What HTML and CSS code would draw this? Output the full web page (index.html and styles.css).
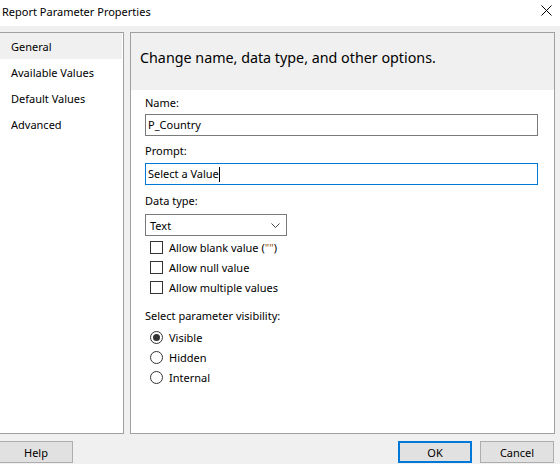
FILE: index.html
```html
<!DOCTYPE html>
<html lang="en">
<head>
  <meta charset="UTF-8" />
  <title>Report Parameter Properties</title>
  <link rel="stylesheet" href="styles.css">
</head>
<body>

<div class="title-bar">
  <span class="title-text">Report Parameter Properties</span>
  <svg class="close-icon" width="11" height="11" viewBox="0 0 11 11">
    <path d="M0.5 0.5 L10.5 10.5 M10.5 0.5 L0.5 10.5" stroke="#000" stroke-width="1" fill="none" />
  </svg>
</div>

<div class="panels">
  <ul class="side-nav">
    <li class="selected">General</li>
    <li>Available Values</li>
    <li>Default Values</li>
    <li>Advanced</li>
  </ul>

  <div class="page">
    <div class="page-header">Change name, data type, and other options.</div>

    <div class="page-form">
      <label class="field-label name-label">Name:</label>
      <div class="text-box">P_Country</div>

      <label class="field-label prompt-label">Prompt:</label>
      <div class="text-box focused">Select a Value<span class="caret"></span></div>

      <label class="field-label type-label">Data type:</label>
      <div class="select-box">
        <span>Text</span>
        <svg width="9" height="5" viewBox="0 0 9 5">
          <path d="M0.5 0.5 L4.5 4.5 L8.5 0.5" stroke="#444" stroke-width="1" fill="none" />
        </svg>
      </div>

      <div class="check-list">
        <div class="check-row"><span class="check-box"></span>Allow blank value (<span class="quotes">""</span>)</div>
        <div class="check-row"><span class="check-box"></span>Allow null value</div>
        <div class="check-row"><span class="check-box"></span>Allow multiple values</div>
      </div>

      <label class="field-label visibility-label">Select parameter visibility:</label>
      <div class="radio-list">
        <div class="radio-row"><span class="radio checked"></span>Visible</div>
        <div class="radio-row"><span class="radio"></span>Hidden</div>
        <div class="radio-row"><span class="radio"></span>Internal</div>
      </div>
    </div>
  </div>
</div>

<div class="button-row">
  <button class="btn">Help</button>
  <div class="btn-group">
    <button class="btn default">OK</button>
    <button class="btn">Cancel</button>
  </div>
</div>

</body>
</html>
```

FILE: styles.css
```css
body {
  font-family: "Noto Sans", Arial, sans-serif;
  font-size: 11px;
  color: #000;
  background-color: #f0f0f0;
  margin: 0;
  padding: 0;
  width: 560px;
  height: 464px;
  overflow: hidden;
}

.title-bar {
  height: 26px;
  background-color: #fff;
  display: flex;
  justify-content: space-between;
  align-items: center;
  padding: 0 8px 0 2px;
  box-sizing: border-box;
}

.title-text {
  margin-top: -3px;
}

.close-icon {
  margin-top: -6px;
}

.panels {
  display: flex;
  gap: 6px;
  margin: 6px 0 0 -1px;
  height: 402px;
}

.side-nav {
  list-style: none;
  margin: 0;
  padding: 0;
  width: 125px;
  background-color: #fff;
  border: 1px solid #a0a0a0;
  box-sizing: border-box;
}

.side-nav li {
  height: 26px;
  line-height: 28px;
  padding-left: 11px;
  margin-right: 1px;
}

.side-nav li.selected {
  background-color: #f0f0f0;
}

.page {
  width: 425px;
  background-color: #fff;
  border: 1px solid #a0a0a0;
  box-sizing: border-box;
}

.page-header {
  height: 57px;
  background-color: #f0f0f0;
  font-size: 14.3px;
  line-height: 20px;
  padding: 15px 0 0 9px;
  box-sizing: border-box;
}

.page-form {
  padding: 0 16px 0 14px;
}

.field-label {
  display: block;
  line-height: 16px;
}

.name-label { margin-top: 5px; }
.prompt-label { margin-top: 7px; }
.type-label { margin-top: 8px; }
.visibility-label { margin-top: 11px; }

.text-box {
  height: 22px;
  line-height: 20px;
  border: 1px solid #7a7a7a;
  padding-left: 2px;
  margin-top: 3px;
  box-sizing: border-box;
  display: flex;
  align-items: center;
}

.text-box.focused {
  border-color: #0078d7;
  margin-top: 4px;
}

.caret {
  display: inline-block;
  width: 1px;
  height: 15px;
  background-color: #000;
}

.select-box {
  width: 142px;
  height: 22px;
  border: 1px solid #7a7a7a;
  margin-top: 5px;
  padding: 0 6px 0 4px;
  box-sizing: border-box;
  display: flex;
  justify-content: space-between;
  align-items: center;
}

.check-list {
  margin-top: 1px;
}

.check-row,
.radio-row {
  height: 20px;
  display: flex;
  align-items: center;
  padding-left: 5px;
}

.quotes {
  color: #9a5a1a;
}

.check-box {
  width: 13px;
  height: 13px;
  border: 1px solid #333;
  box-sizing: border-box;
  margin-right: 6px;
}

.radio-list {
  margin-top: 3px;
}

.radio {
  width: 13px;
  height: 13px;
  border: 1px solid #333;
  border-radius: 50%;
  box-sizing: border-box;
  margin-right: 6px;
  position: relative;
}

.radio.checked::after {
  content: "";
  position: absolute;
  left: 2px;
  top: 2px;
  width: 7px;
  height: 7px;
  border-radius: 50%;
  background-color: #333;
}

.button-row {
  display: flex;
  justify-content: space-between;
  margin: 7px 0 0 -1px;
  padding-right: 6px;
}

.btn-group {
  display: flex;
  gap: 8px;
}

.btn {
  width: 74px;
  height: 22px;
  font-family: "Noto Sans", Arial, sans-serif;
  font-size: 11px;
  color: #000;
  background-color: #e1e1e1;
  border: 1px solid #adadad;
  padding: 0;
}

.btn.default {
  border: 2px solid #0078d7;
}
```
